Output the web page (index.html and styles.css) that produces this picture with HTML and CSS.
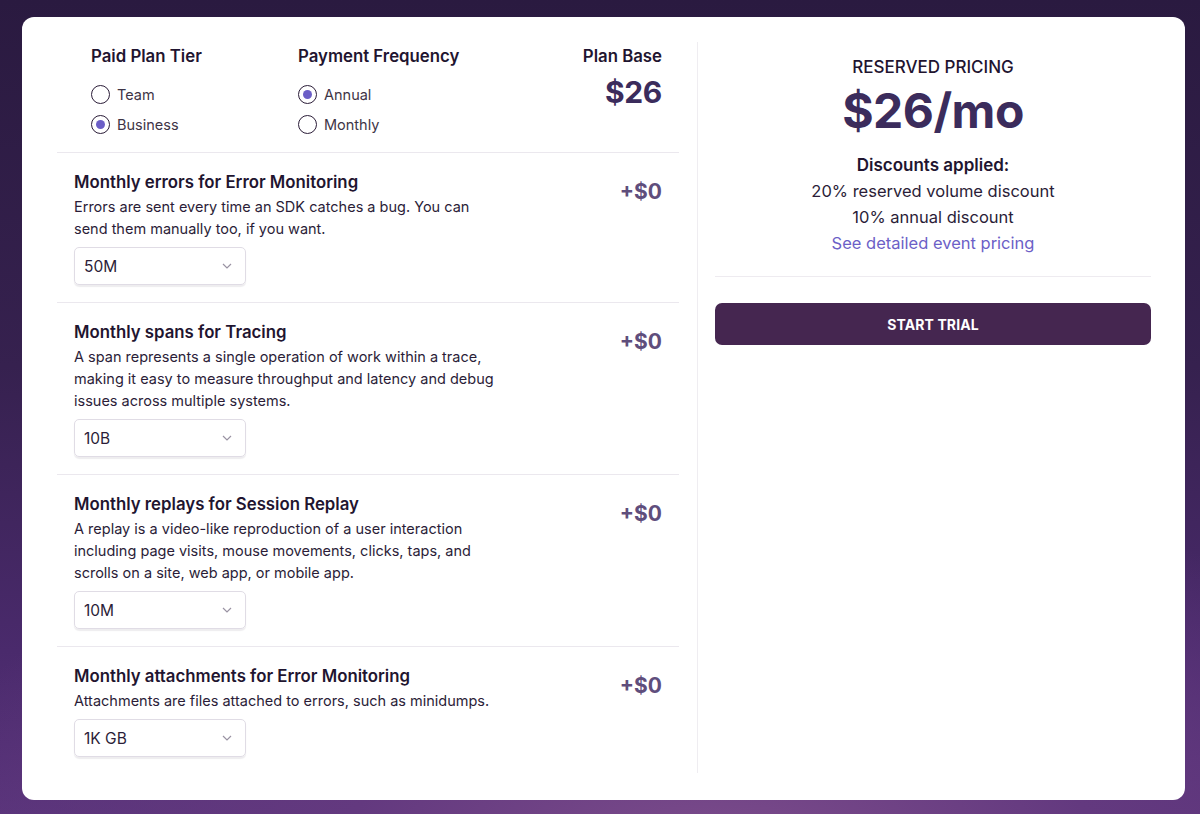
FILE: index.html
```html
<!DOCTYPE html>
<html lang="en">
<head>
<meta charset="utf-8">
<title>Pricing</title>
<link rel="stylesheet" href="styles.css">
</head>
<body>
<div class="page">
  <div class="card">
    <div class="left">
      <div class="plan-head">
        <div class="group tier">
          <div class="group-title">Paid Plan Tier</div>
          <div class="radios">
            <label class="radio"><span class="dot"></span>Team</label>
            <label class="radio"><span class="dot on"></span>Business</label>
          </div>
        </div>
        <div class="group freq">
          <div class="group-title">Payment Frequency</div>
          <div class="radios">
            <label class="radio"><span class="dot on"></span>Annual</label>
            <label class="radio"><span class="dot"></span>Monthly</label>
          </div>
        </div>
        <div class="group base">
          <div class="group-title">Plan Base</div>
          <div class="base-price">$26</div>
        </div>
      </div>

      <div class="item">
        <div class="item-body">
          <div class="item-title">Monthly errors for Error Monitoring</div>
          <div class="item-desc">Errors are sent every time an SDK catches a bug. You can send them manually too, if you want.</div>
          <div class="select"><span>50M</span><svg class="chev" viewBox="0 0 10 6" width="10" height="6"><path d="M1 1l4 4 4-4" fill="none" stroke="#9a93a3" stroke-width="1.2"/></svg></div>
        </div>
        <div class="item-price">+$0</div>
      </div>

      <div class="item">
        <div class="item-body">
          <div class="item-title">Monthly spans for Tracing</div>
          <div class="item-desc">A span represents a single operation of work within a trace, making it easy to measure throughput and latency and debug issues across multiple systems.</div>
          <div class="select"><span>10B</span><svg class="chev" viewBox="0 0 10 6" width="10" height="6"><path d="M1 1l4 4 4-4" fill="none" stroke="#9a93a3" stroke-width="1.2"/></svg></div>
        </div>
        <div class="item-price">+$0</div>
      </div>

      <div class="item">
        <div class="item-body">
          <div class="item-title">Monthly replays for Session Replay</div>
          <div class="item-desc">A replay is a video-like reproduction of a user interaction including page visits, mouse movements, clicks, taps, and scrolls on a site, web app, or mobile app.</div>
          <div class="select"><span>10M</span><svg class="chev" viewBox="0 0 10 6" width="10" height="6"><path d="M1 1l4 4 4-4" fill="none" stroke="#9a93a3" stroke-width="1.2"/></svg></div>
        </div>
        <div class="item-price">+$0</div>
      </div>

      <div class="item last">
        <div class="item-body">
          <div class="item-title">Monthly attachments for Error Monitoring</div>
          <div class="item-desc">Attachments are files attached to errors, such as minidumps.</div>
          <div class="select"><span>1K GB</span><svg class="chev" viewBox="0 0 10 6" width="10" height="6"><path d="M1 1l4 4 4-4" fill="none" stroke="#9a93a3" stroke-width="1.2"/></svg></div>
        </div>
        <div class="item-price">+$0</div>
      </div>
    </div>

    <div class="divider"></div>

    <div class="right">
      <div class="summary">
        <div class="summary-label">RESERVED PRICING</div>
        <div class="summary-price">$26/mo</div>
        <div class="discounts">
          <div class="disc-title">Discounts applied:</div>
          <div>20% reserved volume discount</div>
          <div>10% annual discount</div>
          <a class="disc-link" href="#">See detailed event pricing</a>
        </div>
      </div>
      <button class="cta">START TRIAL</button>
    </div>
  </div>
</div>
</body>
</html>
```

FILE: styles.css
```css
* { box-sizing: border-box; }

html, body {
  margin: 0;
  height: 100%;
}

body {
  font-family: Inter, "Noto Sans", "Liberation Sans", sans-serif;
  color: #2b1d38;
  background:
    radial-gradient(ellipse 70% 45% at 60% 105%, #7d4d8c 0%, #63397f 45%, rgba(80, 45, 110, 0) 100%),
    linear-gradient(180deg, #2a1a40 0%, #36214f 45%, #4a2a6c 80%, #58337a 100%);
}

.page {
  padding: 17px 15px 14px 22px;
}

.card {
  background: #fff;
  border-radius: 12px;
  height: 783px;
  padding: 25px 34px 27px 35px;
  display: flex;
}

.left {
  width: 622px;
  flex: none;
}

.divider {
  width: 1px;
  background: #efedf1;
  margin: 0 17px 0 18px;
  flex: none;
}

.right {
  flex: 1;
}

/* plan header */
.plan-head {
  display: flex;
  padding: 2px 17px 15px 34px;
  border-bottom: 1px solid #ebe8ee;
}

.group-title {
  font-size: 16.8px;
  font-weight: 600;
  line-height: 24px;
  color: #1f1530;
}

.tier { width: 207px; }
.freq { flex: 1; }
.base { text-align: right; }

.radios {
  margin-top: 15px;
  display: flex;
  flex-direction: column;
  gap: 6px;
}

.radio {
  display: flex;
  align-items: center;
  height: 24px;
  font-size: 14.5px;
  line-height: 22px;
  padding-bottom: 1px;
  color: #3e3446;
}

.dot {
  width: 19px;
  height: 19px;
  border: 1.5px solid #2b1d38;
  border-radius: 50%;
  margin-right: 7px;
  display: inline-flex;
  align-items: center;
  justify-content: center;
  flex: none;
}

.dot.on::after {
  content: "";
  width: 9px;
  height: 9px;
  border-radius: 50%;
  background: #6c5fc7;
}

.base-price {
  margin-top: 6px;
  font-size: 30px;
  font-weight: 700;
  line-height: 36px;
  color: #3b2c5c;
  letter-spacing: -0.3px;
}

/* items */
.item {
  display: flex;
  justify-content: space-between;
  padding: 17px;
  border-bottom: 1px solid #ebe8ee;
}

.item.last { border-bottom: none; }

.item-title {
  font-size: 16.8px;
  font-weight: 600;
  line-height: 24px;
  color: #1f1530;
}

.item-desc {
  margin-top: 2px;
  max-width: 428px;
  font-size: 14.5px;
  line-height: 22px;
  color: #2b1d38;
}

.select {
  margin-top: 7px;
  width: 172px;
  height: 38px;
  border: 1px solid #e0dce5;
  border-radius: 5px;
  box-shadow: 0 2px 1px rgba(43, 29, 56, 0.08);
  display: flex;
  align-items: center;
  justify-content: space-between;
  padding: 0 13px 0 9px;
  font-size: 15.5px;
  color: #2b1d38;
}

.item-price {
  margin-top: 8px;
  font-size: 21px;
  font-weight: 700;
  line-height: 28px;
  color: #5f4e7c;
}

/* right column */
.summary {
  text-align: center;
  padding-top: 13px;
  padding-bottom: 20px;
  border-bottom: 1px solid #eeebf0;
}

.summary-label {
  font-size: 17px;
  font-weight: 500;
  line-height: 24px;
  color: #1f1530;
}

.summary-price {
  margin-top: 4px;
  font-size: 48px;
  font-weight: 700;
  line-height: 56px;
  color: #3b2c5c;
  letter-spacing: -0.5px;
}

.discounts {
  margin-top: 13px;
  font-size: 16.5px;
  line-height: 26px;
  color: #2b1d38;
}

.disc-title {
  font-size: 17px;
  font-weight: 600;
  color: #1f1530;
}

.disc-link {
  display: block;
  color: #6c5fc7;
  text-decoration: none;
}

.cta {
  margin-top: 26px;
  width: 100%;
  height: 42px;
  border: none;
  border-radius: 7px;
  background: #452650;
  color: #fff;
  font-family: inherit;
  font-size: 14px;
  font-weight: 700;
  letter-spacing: 0.1px;
}
```
